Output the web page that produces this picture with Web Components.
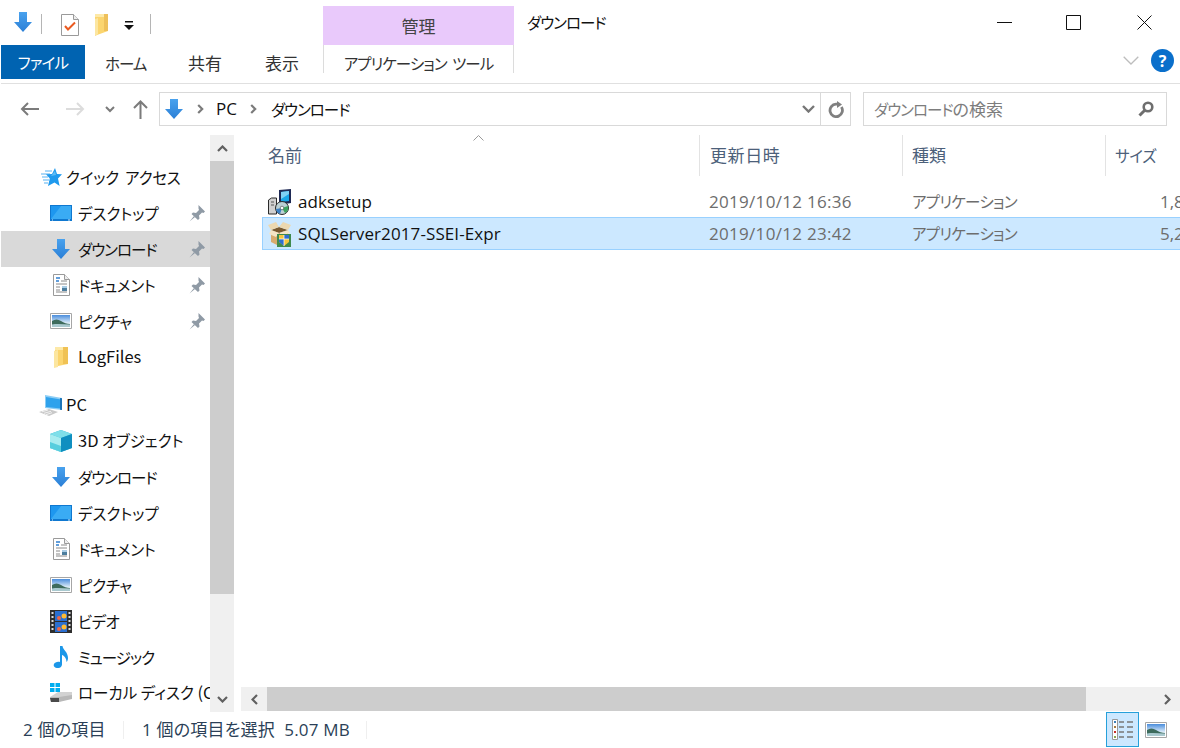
<!DOCTYPE html>
<html lang="ja"><head><meta charset="utf-8"><title>ダウンロード</title>
<style>
html,body{margin:0;padding:0;background:#fff;overflow:hidden}
body{width:1180px;height:748px;font:17px "Noto Sans CJK JP",sans-serif;font-feature-settings:"palt";color:#111}
</style></head><body>
<x-explorer></x-explorer>
<script>
const ICONS={
down:[18,20,'<defs><linearGradient id="g" x1="0" y1="0" x2="0" y2="1"><stop offset="0" stop-color="#49a2ee"/><stop offset="1" stop-color="#2b7fd6"/></linearGradient></defs><path d="M5 0h8v10h5l-9 10-9-10h5z" fill="url(#g)"/>'],
check:[18,22,'<path d="M.5.5h12l5 5v16H.5z" fill="#fff" stroke="#9a9a9a"/><path d="M12.500.5v5h5" fill="#eee" stroke="#9a9a9a"/><path d="M4 12l3 3.500 7-7" fill="none" stroke="#ea5a20" stroke-width="2"/>'],
folderq:[15,22,'<path d="M1 0h13v17L3 21l-2 1z" fill="#fbd56f"/><path d="M10 0h4v17h-4z" fill="#eec05a"/><path d="M1 0h9v3H1z" fill="#fde9a8"/><path d="M1 22V5l3-1v16z" fill="#fce6a0"/>'],
qdrop:[10,9,'<path d="M1 0h8v1.500H1z" fill="#111"/><path d="M0 4h10L5 9z" fill="#111"/>'],
minimize:[15,1,'<path d="M0 0h15v1H0z" fill="#111"/>'],
maximize:[15,15,'<path d="M.5.5h14v14H.5z" fill="none" stroke="#111"/>'],
close:[15,15,'<path d="M.5.5l14 14M14.500.5l-14 14" stroke="#111" fill="none"/>'],
collapse:[16,9,'<path d="M.7.7L8 8l7.300-7.300" fill="none" stroke="#bdbdbd" stroke-width="1.300"/>'],
help:[23,23,'<circle cx="11.500" cy="11.500" r="11.500" fill="#0a6fcb"/><text x="11.500" y="17.500" font-family="Open Sans" font-size="16" font-weight="700" fill="#fff" text-anchor="middle">?</text>'],
back:[19,14,'<path d="M19 7H2M8 1L2 7l6 6" fill="none" stroke="#7b7b7b" stroke-width="2"/>'],
forward:[19,14,'<path d="M0 7h17M11 1l6 6-6 6" fill="none" stroke="#dcdcdc" stroke-width="2"/>'],
hist:[10,7,'<path d="M1 1l4 4 4-4" fill="none" stroke="#7b7b7b" stroke-width="2"/>'],
up:[15,19,'<path d="M7.500 19V2M1 8l6.500-6.500L14 8" fill="none" stroke="#7b7b7b" stroke-width="2"/>'],
crumb:[7,10,'<path d="M1.200 1l4 4-4 4" fill="none" stroke="#7b7b7b" stroke-width="2.200"/>'],
addrdrop:[13,8,'<path d="M1 1l5.500 5.500L12 1" fill="none" stroke="#777" stroke-width="2.400"/>'],
refresh:[16,17,'<path d="M13.400 6A6.200 6.200 0 1 1 8 3.200H10" fill="none" stroke="#808080" stroke-width="2.800"/><path d="M9 0v7l5-3.500z" fill="#808080"/>'],
search:[16,16,'<circle cx="10" cy="6" r="4.300" fill="none" stroke="#6e6e6e" stroke-width="2.600"/><path d="M6.800 9.200L1.500 14.500" stroke="#6e6e6e" stroke-width="3"/>'],
quick:[21,19,'<path d="M0 6h9M1 9h6M2 12h6M4 3h7M3 15h4" stroke="#8fcbf6" stroke-width="1.300"/><path d="M14 0l2 6 5 .3-4 4.200 1.600 7.500-5.100-3.500L7 18l1.800-7.500L5 6.300 11 6z" fill="#1f9aee"/><path d="M14 3l1 4-5 1z" fill="#5cbcf7"/>'],
desktop:[22,16,'<path d="M0 0h22v16H0z" fill="#0f78d0"/><path d="M1 1h20v13H1z" fill="#1e97ef"/><path d="M1 14l10-13h10v13z" fill="#3aabf4"/><path d="M2 15h1M18 15h2" stroke="#cfe9fb"/>'],
doc:[17,22,'<path d="M.5.5h11l5 5v16H.5z" fill="#fff" stroke="#9a9a9a"/><path d="M11.500.5v5h5" fill="#eee" stroke="#9a9a9a"/><path d="M3 4h4M3 7h3" stroke="#2f7fd0" stroke-width="1.500"/><path d="M8 7h6M3 10h11M3 18h11M3 16h4M3 13h4" stroke="#8a8a8a"/><path d="M9 12h5v5H9z" fill="#4d7e9e"/><path d="M9 12h5v2H9z" fill="#a9cde6"/>'],
picture:[22,16,'<defs><linearGradient id="s" x1="0" y1="0" x2="0" y2="1"><stop offset="0" stop-color="#4a8ddc"/><stop offset=".7" stop-color="#e4f1fa"/></linearGradient></defs><path d="M.5.5h21v15H.5z" fill="#fff" stroke="#a6a6a6"/><path d="M2 2h18v12H2z" fill="url(#s)"/><path d="M2 8c3-2 6-2 9 0s6 3 9 3v1H2z" fill="#3d6b5c"/><path d="M2 11.500c6-1 12 0 18 0V14H2z" fill="#a9c9cf"/>'],
folder:[14,21,'<path d="M1 0h13v17l-10 2H1z" fill="#fbd56f"/><path d="M9 0h5v17H9z" fill="#f0c254"/><path d="M1 0h8v3H1z" fill="#fde9a8"/><path d="M0 21V4l4-1v17z" fill="#fce6a0"/>'],
pc:[24,21,'<path d="M6 0l17 3v12L6 13z" fill="#8ccdf5"/><path d="M7 2l15 2.500v9L7 12z" fill="#2fa2ec"/><path d="M21 3l2 .3v11.800l-2-.4z" fill="#1b74b8"/><path d="M0 17l10-3 9 3-9 4z" fill="#c9c9c9"/><path d="M3 16.800l6-1.800M5 18.300l7-2M7 19.700l6-2" stroke="#f2f2f2"/>'],
cube:[22,22,'<path d="M11 0l11 4v14l-11 4-11-4V4z" fill="#2ab6d6"/><path d="M11 0l11 4-11 4L0 4z" fill="#7fdfe9"/><path d="M0 4l11 4v14L0 18z" fill="#a8ecf0"/><path d="M0 12l11 4v6L0 18z" fill="#57cede"/><path d="M11 8l11-4v14l-11 4z" fill="#108fc0"/>'],
video:[22,23,'<path d="M0 0h22v23H0z" fill="#2e2e2e"/><path d="M5 1h12v10H5z" fill="#2a6fd0"/><path d="M5 12h12v10H5z" fill="#2a6fd0"/><circle cx="9" cy="8" r="2" fill="#e64"/><circle cx="14" cy="6" r="2.500" fill="#fb3"/><circle cx="9" cy="19" r="2" fill="#e64"/><circle cx="14" cy="17" r="2.500" fill="#fb3"/><path d="M1.500 2h2v2h-2zM1.500 6h2v2h-2zM1.500 10h2v2h-2zM1.500 14h2v2h-2zM1.500 18h2v2h-2zM18.500 2h2v2h-2zM18.500 6h2v2h-2zM18.500 10h2v2h-2zM18.500 14h2v2h-2zM18.500 18h2v2h-2z" fill="#ddd"/>'],
music:[16,22,'<path d="M7 0h2.500c.5 4 5.500 6 5.500 12 0 1.500-.5 3-1.500 4 0-4-2.500-6.500-4.500-7v9.500C9 21 6.500 22.300 4 22 1.500 21.700 0 20 1 18c1-1.800 3.500-2.800 6-2z" fill="#1c97e8"/>'],
disk:[22,20,'<path d="M0 0h4.500v4H0zM5.500 0H10v4H5.500zM0 5h4.500v4H0zM5.500 5H10v4H5.500z" fill="#00adef"/><path d="M0 14l8-5h14v6L8 19z" fill="#d2d2d2"/><path d="M0 14h9l13-2v4l-13 3H1z" fill="#b8b8b8"/><path d="M0 15h9v4H1z" fill="#4a4a4a"/>'],
pin:[16,17,'<path d="M9.500 0L16 6.500l-1.500 1.500-1.500-.5-3 3 .5 3-1.500 1.500L2.500 9 4 7.500l3 .5 3-3-.5-1.500z" fill="#8f9aa5"/><path d="M5 11L.5 16.500 6 12z" fill="#8f9aa5"/>'],
installer:[24,26,'<path d="M11 1l12-1v14l-12 2z" fill="#1f2a55"/><path d="M13 3l8-1v10l-8 1z" fill="#1aa6e8"/><path d="M13 3l8-1v3l-8 5z" fill="#7fd0f5"/><path d="M.5 11l3-2h5v16h-8z" fill="#d0d0d0" stroke="#2b2b2b"/><path d="M3 13h3M3 16h3" stroke="#555"/><circle cx="14" cy="19" r="6.500" fill="#bcd0d4" stroke="#2b2b2b"/><path d="M14 19l6-2a6 6 0 0 1-3 7z" fill="#3fa45f"/><path d="M14 19l-6 1a6 6 0 0 0 4 5z" fill="#3a7fc4"/><circle cx="14" cy="19" r="1.800" fill="#fff" stroke="#444" stroke-width=".6"/>'],
package:[23,26,'<path d="M3 9l8 3v13l-8-4z" fill="#d8ab6e"/><path d="M11 12l9-3v12l-9 4z" fill="#a98149"/><path d="M3 9l8-3 9 3-9 3z" fill="#7a5a30"/><path d="M3 9L0 4l8-3 3 5zM20 9l3-5-8-3-4 5z" fill="#ecd8b0"/><path d="M3 9l8 3-3 4-7-3zM20 9l-9 3 3 3 8-3z" fill="#f4e5c6"/><path d="M9 13h14v13H9z" fill="#3f8a4d"/><path d="M11 14h10v7l-5 4-5-4z" fill="#f6c63c"/><path d="M16 14h5v4h-5zM11 18h5v7l-5-4z" fill="#2f6fd0"/><path d="M16 14v11M11 18h10" stroke="#fff" stroke-width=".7"/>'],
details:[22,21,'<path d="M.5.5h5v20h-5z" fill="#fff" stroke="#999"/><path d="M2 2h2v2H2z" fill="#3b7fb8"/><path d="M2 7h2v2H2z" fill="#a67b3f"/><path d="M2 12h2v2H2z" fill="#c8302a"/><path d="M2 17h2v2H2z" fill="#88a850"/><path d="M7 3h5M15 3h6M7 8h5M15 8h6M7 13h5M15 13h6M7 18h5M15 18h6" stroke="#777" stroke-width="1.300"/>'],
arrU:[11,7,'<path d="M1 6l4.500-4.500L10 6" fill="none" stroke="#606060" stroke-width="2.200"/>'],
arrD:[11,7,'<path d="M1 1l4.500 4.500L10 1" fill="none" stroke="#606060" stroke-width="2.200"/>'],
arrL:[7,11,'<path d="M6 1L1.500 5.500 6 10" fill="none" stroke="#606060" stroke-width="2.200"/>'],
arrR:[7,11,'<path d="M1 1l4.500 4.500L1 10" fill="none" stroke="#606060" stroke-width="2.200"/>'],
sort:[11,6,'<path d="M.5 5.500L5.500.5l5 5" fill="none" stroke="#9a9a9a"/>']
};
let uid=0;
class XIcon extends HTMLElement{
  connectedCallback(){
    if(this.shadowRoot)return;
    const [w,h,body]=ICONS[this.getAttribute('name')];
    const n='i'+(++uid);
    const b=body.replace(/id="(g|s)"/g,`id="$1${n}"`).replace(/url\(#(g|s)\)/g,`url(#$1${n})`);
    this.attachShadow({mode:'open'}).innerHTML=`<style>:host{display:inline-flex;flex:none;line-height:0}svg{display:block}</style><svg width="${w}" height="${h}" viewBox="0 0 ${w} ${h}">${b}</svg>`;
  }
}
customElements.define('x-icon',XIcon);

function def(tag,html){
  customElements.define(tag,class extends HTMLElement{
    constructor(){super();this.attachShadow({mode:'open'}).innerHTML=typeof html==='function'?'':html;}
    connectedCallback(){if(typeof html==='function')this.shadowRoot.innerHTML=html(this);}
  });
}
const kana=`font:15.500px/1.2 "Noto Sans CJK JP",sans-serif;font-feature-settings:"palt";`;
const latin=`font:17px/1.2 "Open Sans","Noto Sans CJK JP",sans-serif;font-feature-settings:"palt";`;

def('x-ribbon',`<style>
:host{display:block;height:84px;box-sizing:border-box;border-bottom:1px solid #e0e0e0;margin-left:1px;${kana}}
.top{display:flex;height:45px}
.qat{display:flex;align-items:flex-start;width:322px;padding:12px 0 0 13px;box-sizing:border-box}
.sep{width:1px;height:20px;background:#b5b5b5;margin-top:2px}
.ctx{width:191px;margin-top:6px;height:39px;background:#e9c9fb;display:flex;align-items:center;justify-content:center;color:#444;font-size:17px;padding-top:2px;box-sizing:border-box}
.title{margin:12px 0 0 13px;line-height:20px;color:#111;flex:1;letter-spacing:-1px}
.win{display:flex;padding:15px 28px 0 0;align-items:flex-start}
.tabs{display:flex;height:34px;align-items:stretch}
.tab{display:flex;align-items:center;color:#333;white-space:nowrap;padding-top:3px;box-sizing:border-box}
.kj{font-size:17px}
.file{width:84px;background:#0063b1;color:#fff;justify-content:center;letter-spacing:-.7px;padding-top:0}
.app{width:191px;border:solid #dcdcdc;border-width:0 1px;justify-content:center;height:28px;color:#333;padding-top:8px;letter-spacing:-.95px;word-spacing:3px}
.end{margin-left:auto;display:flex;align-items:center;padding:0 6px 0 0;margin-top:-3px}
</style>
<div class="top">
 <div class="qat">
  <x-icon name="down"></x-icon><span class="sep" style="margin-left:9px"></span>
  <x-icon name="check" style="margin:2px 0 0 19px"></x-icon>
  <x-icon name="folderq" style="margin:2px 0 0 15px"></x-icon>
  <x-icon name="qdrop" style="margin:9px 0 0 15px"></x-icon><span class="sep" style="margin-left:16px"></span>
 </div>
 <div class="ctx">管理</div>
 <div class="title">ダウンロード</div>
 <div class="win"><x-icon name="minimize" style="margin-top:7px"></x-icon><x-icon name="maximize" style="margin-left:54px"></x-icon><x-icon name="close" style="margin-left:56px"></x-icon></div>
</div>
<div class="tabs">
 <div class="tab file">ファイル</div>
 <div class="tab" style="margin-left:20px;width:41px;letter-spacing:-1px">ホーム</div>
 <div class="tab kj" style="margin-left:42px;width:34px">共有</div>
 <div class="tab kj" style="margin-left:43px;width:34px">表示</div>
 <div class="tab app" style="margin-left:24px">アプリケーション ツール</div>
 <div class="end"><x-icon name="collapse"></x-icon><x-icon name="help" style="margin-left:12px"></x-icon></div>
</div>`);

def('x-addressbar',`<style>
:host{display:flex;align-items:center;height:34px;margin:8px 0 9px 0;${kana}}
.nav{display:flex;align-items:center;width:159px;padding-left:20px;box-sizing:border-box;flex:none}
.box{height:34px;box-sizing:border-box;border:1px solid #d9d9d9;display:flex;align-items:center}
.path{width:692px;flex:none;padding-left:5px;color:#111}
.path .pc{${latin}}
.dl{letter-spacing:-1px}
.div{width:1px;height:32px;background:#d9d9d9}
.search{width:304px;margin-left:12px;padding:0 12px 0 10px;justify-content:space-between;color:#7d7d7d;flex:none}
.search b{font-weight:400;font-size:17px;letter-spacing:0}
</style>
<div class="nav"><x-icon name="back"></x-icon><x-icon name="forward" style="margin-left:27px"></x-icon><x-icon name="hist" style="margin-left:20px"></x-icon><x-icon name="up" style="margin-left:18px"></x-icon></div>
<div class="box path"><x-icon name="down"></x-icon><x-icon name="crumb" style="margin-left:14px"></x-icon><span class="pc" style="margin-left:12px">PC</span><x-icon name="crumb" style="margin-left:13px"></x-icon><span class="dl" style="margin-left:14px">ダウンロード</span><span style="flex:1"></span><x-icon name="addrdrop"></x-icon><span class="div" style="margin-left:5px"></span><x-icon name="refresh" style="margin:0 6px 0 7px"></x-icon></div>
<div class="box search"><span><span class="dl">ダウンロード</span><b>の検索</b></span><x-icon name="search"></x-icon></div>`);

def('x-nav-item',h=>`<style>
:host{display:flex;align-items:center;height:36px;box-sizing:border-box;white-space:nowrap;overflow:hidden;${kana}color:#111}
:host([selected]){background:#d9d9d9}
.ic{width:28px;display:flex;justify-content:center;flex:none}
.t{flex:1;overflow:hidden;letter-spacing:${h.getAttribute('ls')||0}px;word-spacing:${h.getAttribute('ws')||0}px}
.pin{padding-right:5px;display:flex;flex:none}
</style>
<span style="width:${h.hasAttribute('top')?'36px':'46px'};flex:none"></span>
<span class="ic"><x-icon name="${h.getAttribute('icon')}"></x-icon></span>
<span class="t" style="margin-left:${h.hasAttribute('top')?'1px':'3px'}"><slot></slot></span>
${h.hasAttribute('pin')?'<span class="pin"><x-icon name="pin"></x-icon></span>':''}`);

def('x-sidebar',`<style>:host{display:block;width:209px;margin-left:1px;padding-top:24px;box-sizing:border-box;overflow:hidden;flex:none;height:577px}</style><slot></slot>`);

def('x-vscroll',`<style>:host{display:flex;flex-direction:column;width:24px;background:#f0f0f0;flex:none}
.b{height:26px;display:flex;align-items:center;justify-content:center}
.t{height:433px;background:#cdcdcd}.s{flex:1}</style>
<div class="b"><x-icon name="arrU"></x-icon></div><div class="t"></div><div class="s"></div><div class="b"><x-icon name="arrD"></x-icon></div>`);

def('x-hscroll',`<style>:host{display:flex;height:24px;background:#f0f0f0;margin:0 0 1px 1px;flex:none}
.b{width:26px;display:flex;align-items:center;justify-content:center}
.t{width:819px;background:#cdcdcd}.s{flex:1}</style>
<div class="b"><x-icon name="arrL"></x-icon></div><div class="t"></div><div class="s"></div><div class="b"><x-icon name="arrR"></x-icon></div>`);

const cols='grid-template-columns:437px 203px 203px 1fr;';
def('x-list-header',`<style>
:host{display:grid;${cols}height:41px;margin-left:22px;color:#4c607a;${kana}margin-bottom:10px}
.c{display:flex;align-items:center;padding-left:9px;border-left:1px solid #e3e3e3;white-space:nowrap;font-size:17px;position:relative}
.c1{border:0;padding-left:6px}
.s{position:absolute;left:211px;top:0}
.c2{letter-spacing:.6px;padding-left:10px}
.c4{font-size:15.500px;letter-spacing:-.3px}
</style>
<div class="c c1">名前<x-icon class="s" name="sort"></x-icon></div>
<div class="c c2">更新日時</div><div class="c">種類</div><div class="c c4">サイズ</div>`);

def('x-file-row',h=>`<style>
:host{display:grid;${cols}height:31px;margin-left:22px;align-items:center;white-space:nowrap;${latin}color:#6d6d6d}
:host([selected]){background:#cce8ff;border:solid #99d1ff;border-width:1px 0;box-shadow:inset 1px 0 #99d1ff}
.n{display:flex;align-items:center;color:#111;padding-left:6px;letter-spacing:.1px;height:31px}
.n span{margin-left:6px;padding-top:2px}
.d{padding:2px 0 0 10px;letter-spacing:.3px}.k{padding:0 0 0 10px;${kana}letter-spacing:-.7px;color:#6d6d6d}
.z{padding:2px 0 0 55px;overflow:hidden}
</style>
<div class="n"><x-icon name="${h.getAttribute('icon')}" style="width:24px"></x-icon><span>${h.getAttribute('name')}</span></div>
<div class="d">${h.getAttribute('date')}</div><div class="k">アプリケーション</div><div class="z">${h.getAttribute('size')}</div>`);

def('x-statusbar',`<style>
:host{display:flex;align-items:center;height:36px;${latin}color:#2b3f57;white-space:nowrap}
.sep{width:1px;height:18px;background:#efefef}
.t{padding-top:1px;letter-spacing:.2px}
.v{width:33px;height:35px;box-sizing:border-box;border:1px solid #26a0da;background:#cce8ff;display:flex;align-items:center;justify-content:center;margin:0 0 1px auto}
</style>
<span class="t" style="margin-left:23px;width:100px">2 個の項目</span><span class="sep"></span>
<span class="t" style="margin-left:18px;width:224px">1 個の項目を選択&nbsp;&nbsp;5.07 MB</span><span class="sep"></span>
<span class="v"><x-icon name="details"></x-icon></span><x-icon name="picture" style="margin:0 13px 0 6px"></x-icon>`);

def('x-explorer',`<style>
:host{display:flex;flex-direction:column;width:1180px;height:748px;overflow:hidden}
.mid{display:flex;height:577px;flex:none}
.main{flex:1;margin-left:6px;display:flex;flex-direction:column;min-width:0;overflow:hidden}
.list{flex:1;overflow:hidden;min-height:0}
.gap{height:12px}
.l{font-size:16.500px}
x-statusbar{flex:none}
</style>
<x-ribbon></x-ribbon><x-addressbar></x-addressbar>
<div class="mid">
 <x-sidebar>
  <x-nav-item top icon="quick" ws="3" ls="-.2">クイック アクセス</x-nav-item>
  <x-nav-item icon="desktop" pin>デスクトップ</x-nav-item>
  <x-nav-item icon="down" pin selected ls="-1">ダウンロード</x-nav-item>
  <x-nav-item icon="doc" pin ls="-.3">ドキュメント</x-nav-item>
  <x-nav-item icon="picture" pin ls="-.3">ピクチャ</x-nav-item>
  <x-nav-item icon="folder"><span class="l">LogFiles</span></x-nav-item>
  <div class="gap"></div>
  <x-nav-item top icon="pc"><span class="l">PC</span></x-nav-item>
  <x-nav-item icon="cube"><span class="l">3D</span> オブジェクト</x-nav-item>
  <x-nav-item icon="down" ls="-1">ダウンロード</x-nav-item>
  <x-nav-item icon="desktop">デスクトップ</x-nav-item>
  <x-nav-item icon="doc" ls="-.3">ドキュメント</x-nav-item>
  <x-nav-item icon="picture" ls="-.3">ピクチャ</x-nav-item>
  <x-nav-item icon="video" ls="-.6">ビデオ</x-nav-item>
  <x-nav-item icon="music" ls="-1">ミュージック</x-nav-item>
  <x-nav-item icon="disk">ローカル ディスク <span class="l">(C:)</span></x-nav-item>
 </x-sidebar>
 <x-vscroll></x-vscroll>
 <div class="main">
  <div class="list">
   <x-list-header></x-list-header>
   <x-file-row icon="installer" name="adksetup" date="2019/10/12 16:36" size="1,8"></x-file-row>
   <x-file-row icon="package" name="SQLServer2017-SSEI-Expr" date="2019/10/12 23:42" size="5,2" selected></x-file-row>
  </div>
  <x-hscroll></x-hscroll>
 </div>
</div>
<x-statusbar></x-statusbar>`);
</script>
</body></html>
